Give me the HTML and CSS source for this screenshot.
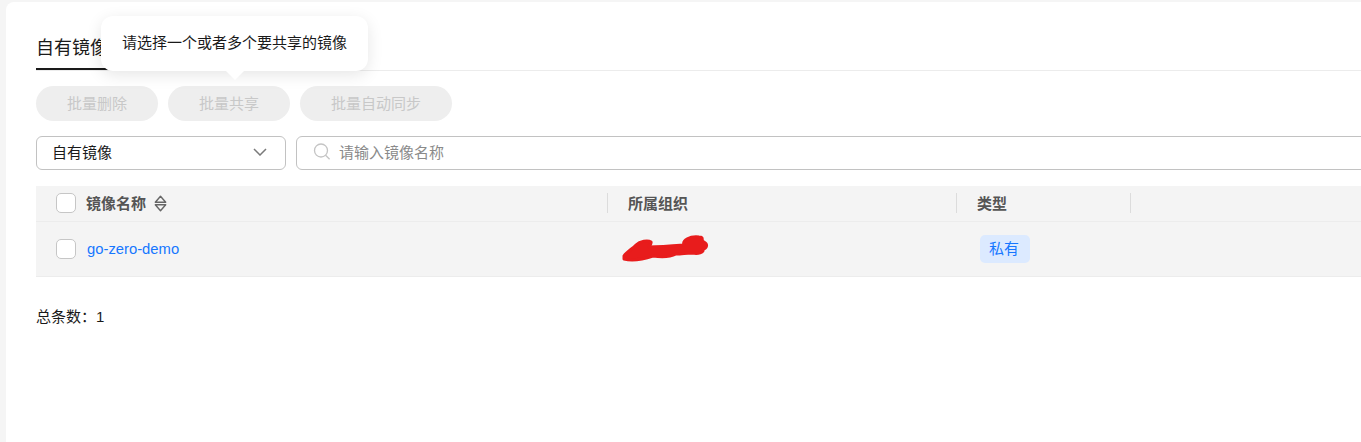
FILE: index.html
```html
<!DOCTYPE html>
<html lang="zh-CN">
<head>
    <meta charset="UTF-8">
    <title>自有镜像</title>
    <link rel="stylesheet" href="styles.css">
</head>
<body>
    <div class="card">
        <div class="tabs">
            <div class="tab">自有镜像</div>
            <div class="tooltip">请选择一个或者多个要共享的镜像</div>
        </div>

        <div class="actions">
            <button class="btn btn-small">批量删除</button>
            <button class="btn btn-small">批量共享</button>
            <button class="btn btn-large">批量自动同步</button>
        </div>

        <div class="filters">
            <div class="select">
                <span>自有镜像</span>
                <svg class="chevron" width="14" height="8" viewBox="0 0 14 8"><path d="M1 1l6 6 6-6" fill="none" stroke="#7a7a7a" stroke-width="1.5"/></svg>
            </div>
            <div class="search">
                <svg class="search-icon" width="18" height="18" viewBox="0 0 18 18"><circle cx="8" cy="7.500" r="6.500" fill="none" stroke="#c4c4c4" stroke-width="1.300"/><path d="M12.600 12.200l4 4" stroke="#c4c4c4" stroke-width="1.300"/></svg>
                <span>请输入镜像名称</span>
            </div>
        </div>

        <div class="table">
            <div class="row head">
                <div class="cell cell-name">
                    <span class="checkbox"></span>
                    <span>镜像名称</span>
                    <svg class="sort" width="13" height="17" viewBox="0 0 13 17"><path d="M6.500 1.200L11.700 7.300H1.300Z M1.300 9.700H11.700L6.500 15.800Z" fill="none" stroke="#666" stroke-width="1.400" stroke-linejoin="round"/></svg>
                </div>
                <div class="cell cell-org"><span class="divider"></span>所属组织</div>
                <div class="cell cell-type"><span class="divider"></span>类型<span class="divider divider-end"></span></div>
            </div>
            <div class="row body">
                <div class="cell cell-name">
                    <span class="checkbox"></span>
                    <a class="link">go-zero-demo</a>
                </div>
                <div class="cell cell-org">
                    <svg class="scribble" width="90" height="30" viewBox="0 0 90 30"><path d="M4 24C7 20 12 17 16 13C20 9 28 8 31 10C32 13 27 14 29 15C40 15 52 14 64 13C62 8 70 4 79 5C85 5 80 9 84 10C88 12 87 16 83 17C84 21 78 22 72 21C66 21 62 22 56 22C50 25 40 25 33 24C24 27 12 29 4 27Z" fill="#e81c1c" stroke="#e81c1c" stroke-width="3" stroke-linejoin="round"/></svg>
                </div>
                <div class="cell cell-type"><span class="tag">私有</span></div>
            </div>
        </div>

        <div class="total">总条数：1</div>
    </div>
</body>
</html>
```

FILE: styles.css
```css
body {
    margin: 0;
    height: 442px;
    overflow: hidden;
    background: #f5f5f5;
    font-family: "Liberation Sans", "Noto Sans CJK SC", sans-serif;
    font-size: 15px;
    color: #1a1a1a;
}
.card {
    box-sizing: border-box;
    height: 440px;
    margin: 2px 0 0 6px;
    padding: 28px 0 0 30px;
    background: white;
    border-radius: 8px 0 0 0;
}
.tabs {
    position: relative;
    height: 40px;
    border-bottom: 1px solid #ececec;
}
.tab {
    display: inline-block;
    box-sizing: border-box;
    height: 40px;
    padding-top: 6px;
    font-size: 18px;
    line-height: 24px;
    border-bottom: 2px solid #1a1a1a;
}
.tooltip {
    position: absolute;
    left: 65px;
    top: -14px;
    width: 267px;
    height: 55px;
    box-sizing: border-box;
    padding: 0 21px;
    line-height: 54px;
    background: white;
    border-radius: 12px;
    box-shadow: 0 4px 16px rgba(0,0,0,0.1);
    white-space: nowrap;
}
.tooltip::after {
    content: "";
    position: absolute;
    left: 124px;
    bottom: -9px;
    border-top: 10px solid white;
    border-left: 10px solid transparent;
    border-right: 10px solid transparent;
}
.actions {
    display: flex;
    gap: 10px;
    margin-top: 15px;
}
.btn {
    height: 35px;
    padding: 0 0 2px;
    border: none;
    border-radius: 18px;
    background: #eeeeee;
    color: #c8c8c8;
    font-family: inherit;
    font-size: 15px;
}
.btn-small {
    width: 122px;
}
.btn-large {
    width: 152px;
}
.filters {
    display: flex;
    gap: 10px;
    margin-top: 15px;
}
.select, .search {
    display: flex;
    align-items: center;
    box-sizing: border-box;
    height: 34px;
    padding-bottom: 4px;
    border: 1px solid #c2c2c2;
    border-radius: 6px;
}
.select {
    justify-content: space-between;
    width: 250px;
    padding-left: 15px;
    padding-right: 18px;
}
.search {
    flex: 1;
    margin-right: -20px;
    padding-left: 16px;
    color: #8a8a8a;
}
.search-icon {
    margin-right: 8px;
    margin-top: 2px;
}
.chevron {
    margin-top: 2px;
}
.table {
    margin-top: 16px;
    background: #f4f4f4;
}
.row {
    display: grid;
    grid-template-columns: 571px 349px 1fr;
    border-bottom: 1px solid #ececec;
}
.head {
    height: 35px;
    font-weight: bold;
    color: #555;
}
.head .cell {
    padding-bottom: 3px;
    box-sizing: border-box;
}
.head .checkbox, .head .divider, .head .sort {
    margin-top: 2px;
}
.body {
    height: 54px;
}
.cell {
    display: flex;
    align-items: center;
}
.cell-name {
    padding-left: 20px;
}
.checkbox {
    box-sizing: border-box;
    width: 20px;
    height: 20px;
    margin-right: 10px;
    background: white;
    border: 1px solid #c6c6c6;
    border-radius: 5px;
}
.sort {
    margin-left: 8px;
}
.divider {
    width: 1px;
    height: 20px;
    margin-right: 20px;
    background: #dcdcdc;
}
.divider-end {
    margin-left: 123px;
    margin-right: 0;
}
.link {
    margin-left: 1px;
    font-size: 14.8px;
    color: #1677ff;
}
.scribble {
    margin: 0 0 5px 13px;
}
.tag {
    box-sizing: border-box;
    width: 50px;
    height: 28px;
    margin-left: 24px;
    padding-right: 2px;
    line-height: 27px;
    text-align: center;
    color: #1677ff;
    background: #dceaff;
    border-radius: 5px;
}
.total {
    margin-top: 30px;
    line-height: 20px;
}
```
